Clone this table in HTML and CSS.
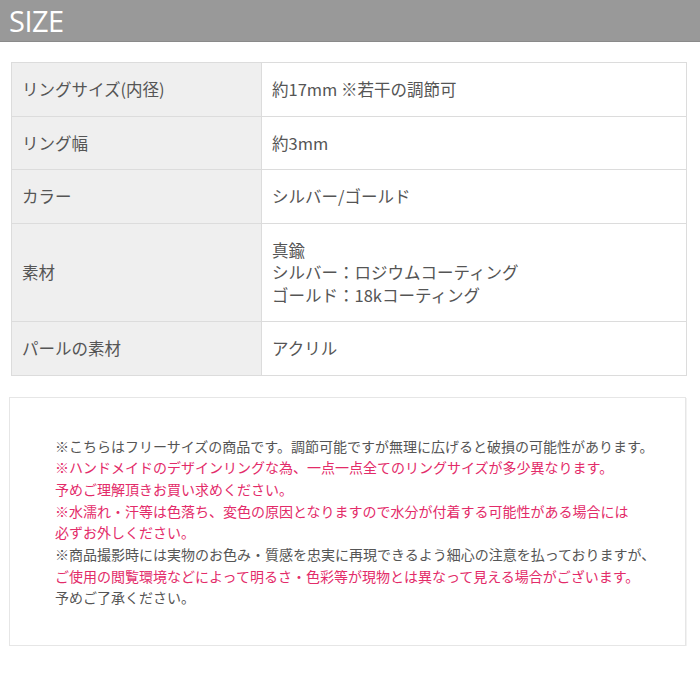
FILE: index.html
```html
<!DOCTYPE html>
<html lang="ja">
<head>
<meta charset="utf-8">
<link rel="stylesheet" href="styles.css">
</head>
<body>
<div class="header"><h1 class="title">SIZE</h1></div>
<table class="spec">
  <tr><th>リングサイズ(内径)</th><td>約17mm ※若干の調節可</td></tr>
  <tr><th>リング幅</th><td>約3mm</td></tr>
  <tr><th>カラー</th><td>シルバー/ゴールド</td></tr>
  <tr><th>素材</th><td>真鍮<br>シルバー：ロジウムコーティング<br>ゴールド：18kコーティング</td></tr>
  <tr><th>パールの素材</th><td>アクリル</td></tr>
</table>
<div class="notes">
  <p>※こちらはフリーサイズの商品です。調節可能ですが無理に広げると破損の可能性があります。</p>
  <p class="pink">※ハンドメイドのデザインリングな為、一点一点全てのリングサイズが多少異なります。<br>予めご理解頂きお買い求めください。</p>
  <p class="pink">※水濡れ・汗等は色落ち、変色の原因となりますので水分が付着する可能性がある場合には<br>必ずお外しください。</p>
  <p>※商品撮影時には実物のお色み・質感を忠実に再現できるよう細心の注意を払っておりますが、</p>
  <p class="pink">ご使用の閲覧環境などによって明るさ・色彩等が現物とは異なって見える場合がございます。</p>
  <p>予めご了承ください。</p>
</div>
</body>
</html>
```
FILE: styles.css
```css
html, body {
  margin: 0;
  padding: 0;
  background: #fff;
}
body {
  font-family: "Noto Sans CJK JP", "Noto Sans", sans-serif;
  color: #555;
}
.header {
  background: #999;
  height: 41px;
  border-bottom: 1px solid #8a8a8a;
  display: flex;
  align-items: center;
  padding-left: 9px;
}
.title {
  margin: 0;
  font-family: "Open Sans", "Noto Sans", sans-serif;
  font-weight: 400;
  font-size: 29px;
  line-height: 1;
  color: #fff;
  letter-spacing: -0.5px;
}
.spec {
  margin: 20px 0 0 11px;
  width: 676px;
  border-collapse: collapse;
  font-size: 16.5px;
  line-height: 22.5px;
}
.spec th, .spec td {
  border: 1px solid #dcdcdc;
  padding: 15px 10px;
  text-align: left;
  font-weight: 400;
  vertical-align: middle;
}
.spec th {
  width: 229px;
  background: #efefef;
}
.spec td {
  background: #fff;
}
.notes {
  margin: 21px 0 0 9px;
  width: 630px;
  border: 1px solid #e6e6e6;
  box-shadow: 1px 1px 0 #f2f2f2;
  padding: 38px 0 36px 45px;
  font-size: 14px;
  line-height: 21.7px;
  color: #555;
}
.notes p {
  margin: 0;
  white-space: nowrap;
}
.notes .pink {
  color: #e32b69;
}
```
